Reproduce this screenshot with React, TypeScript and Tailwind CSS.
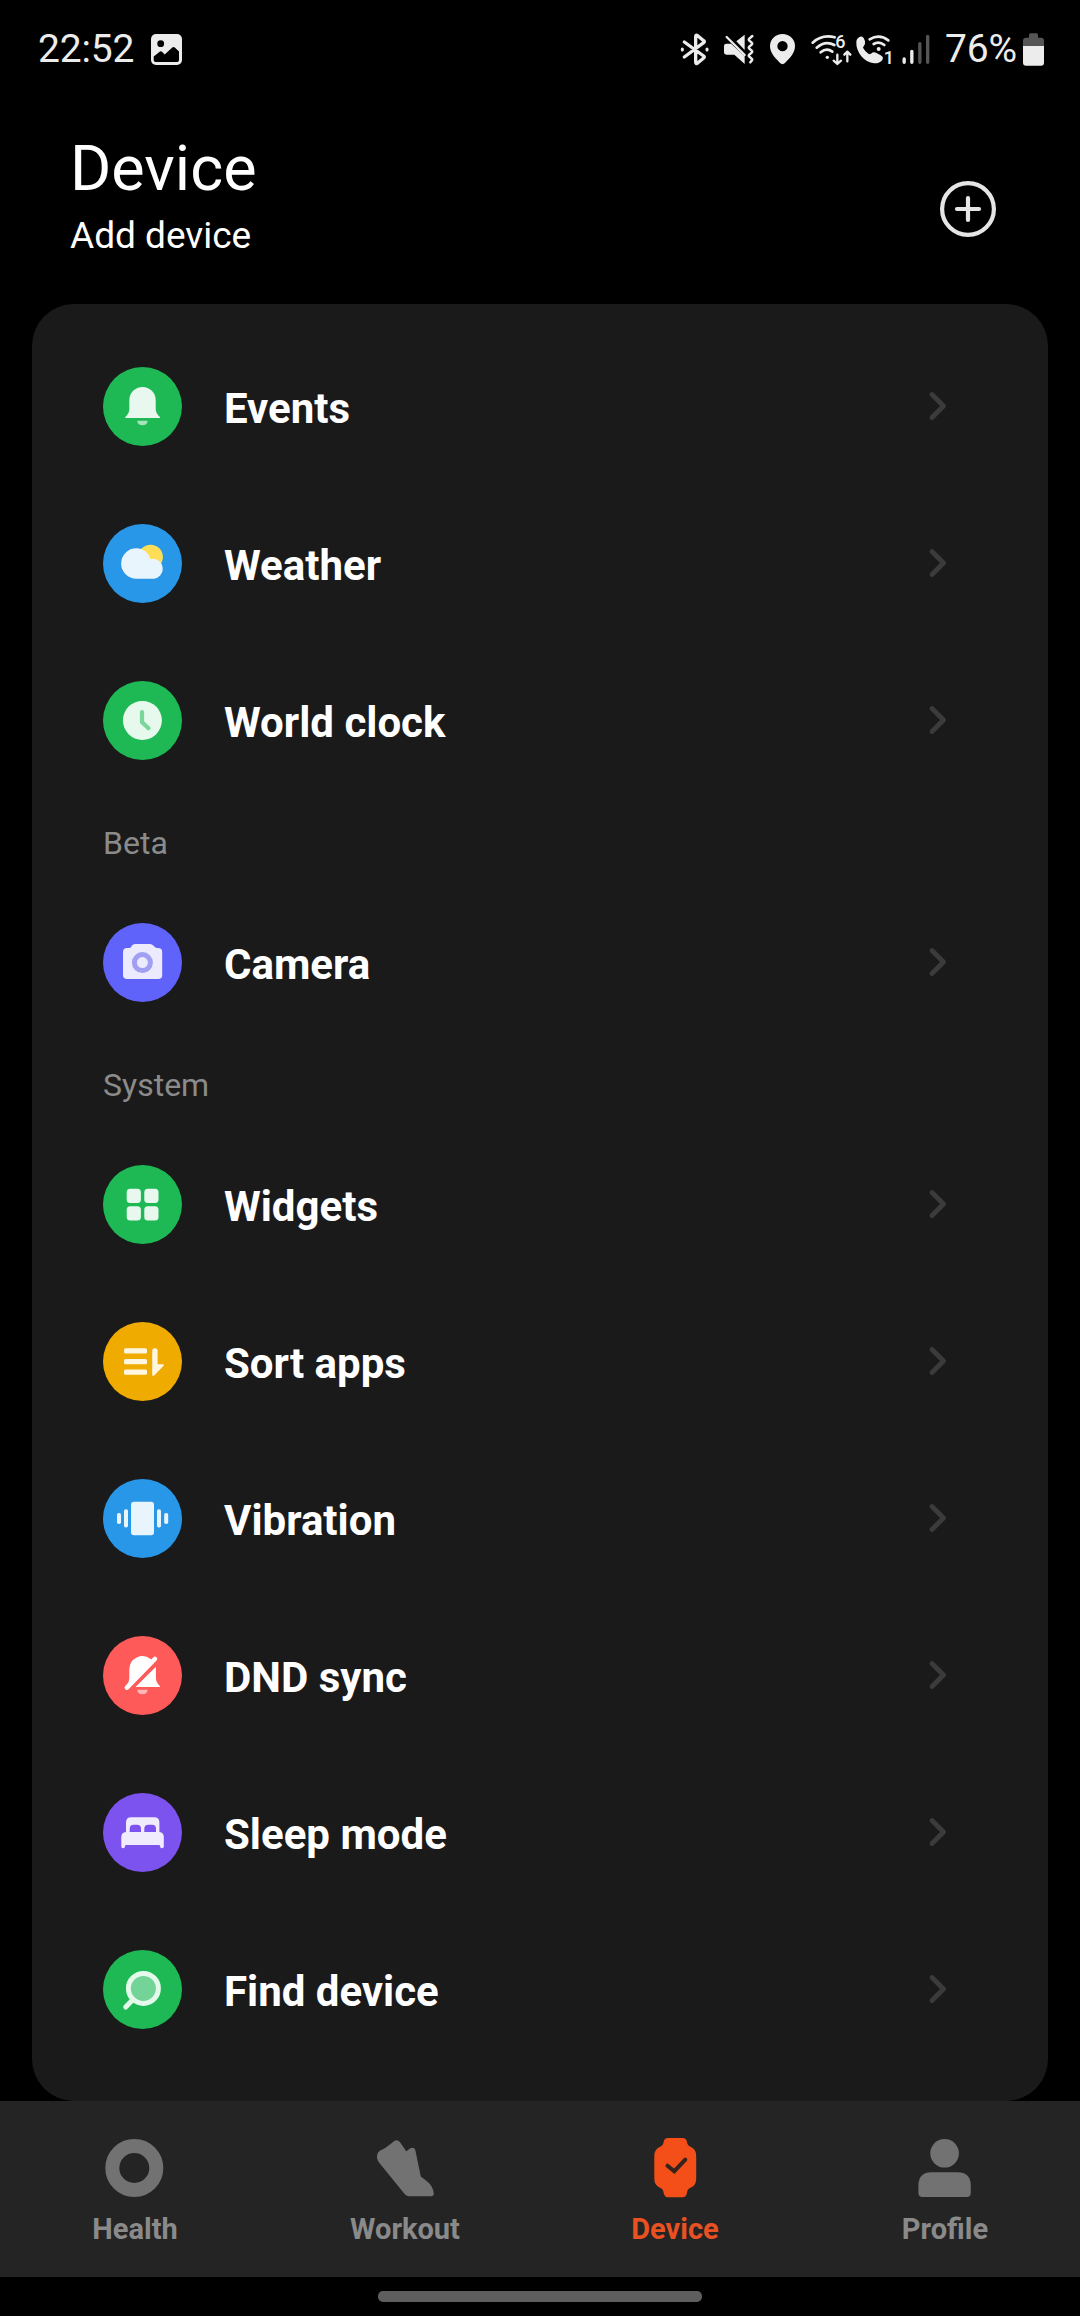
import type { ReactNode } from "react";

const GREEN = "#1eb955";
const BLUE = "#2897e8";

function Bell() {
  return (
    <>
      <path d="M26.3 33.2a13.2 13.2 0 0 1 26.4 0V42q0 4.6 4.3 8.1.7.9-.6.9H22.9q-1.3 0-.6-.9Q26.3 46.600 26.300 42Z" fill="#e8f8ee" />
      <path d="M34.200 53.700h10.500a5.300 5.300 0 0 1-10.500 0Z" fill="#a5e3bb" />
    </>
  );
}

function Weather() {
  return (
    <>
      <circle cx="47.600" cy="33" r="12.300" fill="#ffdd55" />
      <path d="M33.400 24.200c6.800 0 12.300 4.500 14.200 11 .6-.2 2-.4 3.200-.4a10 10 0 0 1 0 19.900H33.400a15.250 15.250 0 0 1 0-30.500Z" fill="#e9f5fd" />
    </>
  );
}

function Clock() {
  return (
    <>
      <circle cx="39.400" cy="39.400" r="19.500" fill="#e6f9ec" />
      <path d="M39 31v10.200l6.500 6" fill="none" stroke="#7ad79a" strokeWidth="4.200" strokeLinecap="round" strokeLinejoin="round" />
    </>
  );
}

function Camera() {
  return (
    <>
      <path d="M32 21h15q2 0 3.300 1.500l1.500 1.600q1 1 2.600 1H55q4.200 0 4.200 4.200V52q0 4-4 4H24q-4 0-4-4V29.300q0-4.200 4.200-4.200.9 0 2-.1 1.200-.2 2-1l.7-1.500Q30 21 32 21Z" fill="#ecebfe" />
      <circle cx="39.400" cy="39.600" r="8" fill="none" stroke="#a09ff2" strokeWidth="5" />
    </>
  );
}

function Widgets() {
  return (
    <g fill="#e8f8ee">
      <rect x="23.700" y="23.700" width="14.200" height="14.200" rx="3.500" />
      <rect x="41.300" y="23.700" width="14.200" height="14.200" rx="3.500" />
      <rect x="23.700" y="41.200" width="14.200" height="14.200" rx="3.500" />
      <rect x="41.300" y="41.200" width="14.200" height="14.200" rx="3.500" />
    </g>
  );
}

function Sort() {
  return (
    <g fill="#fef6e0">
      <rect x="21" y="26.300" width="23" height="5.300" rx="1.500" />
      <rect x="21" y="37" width="23" height="5.300" rx="1.500" />
      <rect x="21" y="47.500" width="23" height="5.300" rx="1.500" />
      <path d="M49.200 28.300q0-2 2.700-2t2.700 2V42.200H60q1.800 0 .6 1.500L51.700 53q-2.500 2-2.500-.5Z" />
    </g>
  );
}

function Vibration() {
  return (
    <g fill="#e9f5fd">
      <rect x="28" y="22.700" width="23" height="33.500" rx="3" />
      <rect x="21" y="30.300" width="4" height="18.200" rx="1.800" />
      <rect x="14" y="34" width="4" height="11" rx="1.800" />
      <rect x="54" y="30.300" width="4" height="18.200" rx="1.800" />
      <rect x="61.200" y="34" width="4" height="11" rx="1.800" />
    </g>
  );
}

function BellOff() {
  return (
    <>
      <path d="M26.300 33.200a13.200 13.200 0 0 1 21.300-10.300L49.500 24 25 49.500 23.800 49Q26.300 46 26.300 42Z" fill="#fff" />
      <path d="M23.900 51.700 51.900 23" stroke="#fff" strokeWidth="4.600" strokeLinecap="round" />
      <path d="M52.900 30.700V42q0 4.600 4 8.100.7.900-.6.900H32.500Z" fill="#fff" />
      <path d="M34.200 53.700h10.500a5.300 5.300 0 0 1-10.500 0Z" fill="#ffb6b6" />
    </>
  );
}

function Bed() {
  return (
    <path
      fillRule="evenodd"
      d="M28.300 24.200h22.800q5.300 0 5.300 5.300v9.600q4.400.6 4.400 5v9.400q0 1.800-1.800 1.800-1.500 0-1.800-1.500L56.600 52H22.500l-.6 1.800q-.4 1.500-1.800 1.500-1.800 0-1.800-1.800v-9.400q0-4.400 4.700-5v-9.600q0-5.300 5.300-5.300ZM26.700 39.100H38v-3.400q0-3.900-3.900-3.900h-3.500q-3.900 0-3.900 3.900ZM41.300 39.100H53v-3.400q0-3.900-3.900-3.900h-3.900q-3.900 0-3.900 3.900Z"
      fill="#f1ecfd"
    />
  );
}

function Find() {
  return (
    <>
      <path d="m29.500 50-6.800 7" stroke="#e3f9ea" strokeWidth="5" strokeLinecap="round" />
      <circle cx="40.400" cy="38.400" r="15" fill="#74d397" stroke="#e3f9ea" strokeWidth="5" />
    </>
  );
}

type Item = { label: string; color: string; icon: ReactNode };

const apps: Item[] = [
  { label: "Events", color: GREEN, icon: <Bell /> },
  { label: "Weather", color: BLUE, icon: <Weather /> },
  { label: "World clock", color: GREEN, icon: <Clock /> },
];
const beta: Item[] = [{ label: "Camera", color: "#6063fa", icon: <Camera /> }];
const system: Item[] = [
  { label: "Widgets", color: GREEN, icon: <Widgets /> },
  { label: "Sort apps", color: "#efab00", icon: <Sort /> },
  { label: "Vibration", color: BLUE, icon: <Vibration /> },
  { label: "DND sync", color: "#ff5a5a", icon: <BellOff /> },
  { label: "Sleep mode", color: "#7c53ee", icon: <Bed /> },
  { label: "Find device", color: GREEN, icon: <Find /> },
];

function Row({ label, color, icon }: Item) {
  return (
    <li className="flex h-[157px] items-center pr-[101px] pl-[71px]">
      <svg className="size-[79px] shrink-0" viewBox="0 0 79 79">
        <circle cx="39.500" cy="39.500" r="39.500" fill={color} />
        {icon}
      </svg>
      <span className="ml-[42px] flex-1 pt-[5px] text-[42px] leading-[50px] font-bold text-white">{label}</span>
      <svg className="mb-px h-[30px] w-[20px]" viewBox="0 0 20 30" fill="none" stroke="#3b3b3b" strokeWidth="4.800" strokeLinecap="round" strokeLinejoin="round">
        <path d="m5 3.500 11.500 11.500L5 26.500" />
      </svg>
    </li>
  );
}

function Section({ title, items }: { title?: string; items: Item[] }) {
  return (
    <section>
      {title && <h2 className="flex h-[85px] items-center pt-[2px] pl-[71px] text-[32px] leading-[38px] text-[#8b8b8b]">{title}</h2>}
      <ul>
        {items.map((item) => (
          <Row key={item.label} {...item} />
        ))}
      </ul>
    </section>
  );
}

function StatusBar() {
  return (
    <div className="flex h-[98px] items-center pr-[35px] pl-[38px] text-[39px] leading-[46px] text-[#ececec]">
      <span className="w-[113px] tracking-[-0.2px]">22:52</span>
      <svg className="h-[31px] w-[31px]" viewBox="0 0 31 31">
        <rect width="31" height="31" rx="5" fill="#ececec" />
        <circle cx="9.700" cy="9.700" r="3.400" fill="#000" />
        <path d="M2.700 22.500 9 17.600q1-.6 2 .2l2.700 2.800 7.600-7q1.300-1 2.500 0l4.200 4V26q0 2-2 2H4.700q-2 0-2-2Z" fill="#000" />
      </svg>
      <div className="ml-auto flex items-center">
        <svg className="h-[36px] w-[35px]" viewBox="60 60 105 108" fill="none" stroke="#ececec" strokeWidth="10" strokeLinecap="round" strokeLinejoin="round">
          <path d="m73 93 58 42q4 3 0 6l-18 15q-6 4-6-3V77q0-7 6-3l18 15q4 3 0 6l-58 43" />
          <path d="M67 114v3M141 114v3" strokeWidth="9" />
        </svg>
        <svg className="h-[36px] w-[49px]" viewBox="165 60 147 108" fill="#ececec">
          <path d="M199 98h14l41 38v23l-31-28h-24q-7 0-7-7v-19q0-7 7-7ZM229 91l25-20v46Z" />
          <path d="m200 78 54 54" stroke="#ececec" strokeWidth="7" strokeLinecap="round" />
          <path d="m277 75-9 8q-3 3 0 6l7 6q3 3 0 6l-7 6q-3 3 0 6l7 6q3 3 0 6l-7 6q-3 3 0 6l7 6q3 3 0 6l-4 5" fill="none" stroke="#ececec" strokeWidth="7.500" strokeLinecap="round" />
        </svg>
        <svg className="h-[36px] w-[41px]" viewBox="312 60 123 108">
          <path fillRule="evenodd" d="M367.500 69c21 0 37.500 15 37.500 36 0 23-18 38-30 51q-7.500 7-15 0c-12-13-30-28-30-51 0-21 16.500-36 37.500-36Zm0 21a15.500 15.500 0 1 0 0 31 15.500 15.500 0 0 0 0-31Z" fill="#ececec" />
        </svg>
        <svg className="h-[36px] w-[49px]" viewBox="435 60 147 108" fill="none" stroke="#ececec" strokeWidth="8" strokeLinecap="round">
          <path d="M458 95q29-26 66-16M470 110q26-23 53-8M482 124q18-15 35-2" />
          <circle cx="502" cy="139" r="5" fill="#ececec" stroke="none" />
          <path d="M532 131v27m-11-9 11 10 11-10M562 151v-28m-9 8 9-9 9 9" strokeWidth="7" strokeLinejoin="round" />
          <text x="526" y="112" fontSize="54" fontWeight="500" fill="#ececec" stroke="none">6</text>
        </svg>
        <svg className="h-[36px] w-[43px]" viewBox="582 60 129 108" fill="none" stroke="#ececec" strokeWidth="8" strokeLinecap="round">
          <path d="M592 83q8-9 15-6 5 2 8 14 2 10-4 15l-2 4q6 12 18 20l6-2q7-7 15-3l14 8q10 5 5 14-9 11-25 10-22-2-38-21-16-20-15-42 0-7 3-11Z" fill="#ececec" stroke="none" />
          <path d="M629 85q29-17 56 3M641 99q16-10 32 3" />
          <circle cx="656" cy="114" r="6" fill="#ececec" stroke="none" />
          <text x="671" y="158" fontSize="54" fontWeight="500" fill="#ececec" stroke="none">1</text>
        </svg>
        <svg className="h-[36px] w-[41px]" viewBox="711 60 123 108" fill="none" strokeWidth="10" strokeLinecap="round">
          <path d="M732.500 144v10M755.500 121v33" stroke="#ececec" />
          <path d="M779.500 98v56M803 76v78" stroke="#555" />
        </svg>
        <span className="w-[84px] pl-[7px] tracking-[-0.200px]">76%</span>
        <svg className="h-[36px] w-[23px]" viewBox="1086 60 69 108">
          <path d="M1107 72q0-5 5-5h17q5 0 5 5v8h9q9 0 9 9v17h-63V89q0-9 9-9h9Z" fill="#555" />
          <path d="M1089 105h63v50q0 9-9 9h-45q-9 0-9-9Z" fill="#ececec" />
        </svg>
      </div>
    </div>
  );
}

function Tab({ label, active, children }: { label: string; active?: boolean; children: ReactNode }) {
  return (
    <div className={`flex flex-1 flex-col items-center pt-[36px] ${active ? "text-[#e95122]" : "text-[#8a8a8a]"}`}>
      <svg className="h-[61px] w-[60px]" viewBox="0 0 60 61" fill="#727272">
        {children}
      </svg>
      <span className="mt-[13px] text-[29px] leading-[36px] font-bold">{label}</span>
    </div>
  );
}

export default function App() {
  return (
    <div className="flex h-[2316px] w-[1080px] flex-col overflow-hidden bg-black font-['Roboto',sans-serif]">
      <StatusBar />
      <header className="flex h-[206px] items-start justify-between pr-[84px] pl-[70px]">
        <div className="flex flex-col pt-[34px]">
          <h1 className="text-[63px] leading-[74px] text-white">Device</h1>
          <p className="mt-[8px] text-[37px] leading-[44px] text-white">Add device</p>
        </div>
        <svg className="mt-[83px] size-[56px]" viewBox="0 0 56 56" fill="none" stroke="#e5e5e5" strokeWidth="4.200" strokeLinecap="round">
          <circle cx="28" cy="28" r="25.900" />
          <path d="M28 17v22M17 28h22" />
        </svg>
      </header>
      <main className="mx-[32px] h-[1797px] shrink-0 rounded-[42px] bg-[#1a1a1a] pt-[24px]">
        <Section items={apps} />
        <Section title="Beta" items={beta} />
        <Section title="System" items={system} />
      </main>
      <nav className="flex h-[176px] shrink-0 bg-[#242424]">
        <Tab label="Health">
          <circle cx="29.300" cy="31" r="22" fill="none" stroke="#727272" strokeWidth="14" />
        </Tab>
        <Tab label="Workout">
          <path d="M2 20.500q-.4-6 5.300-8 2.500-.7 12-8.500 3-2 5.500 1l6.500 9.300 4-3q4-1.800 5 1.700l5.500 26.500 5.500 4.300q6.500 4.500 7.500 12.700 0 2.800-2.800 2.800H34.500q-3.500 0-5.500-3L4 25.500q-1.800-2.500-2-5Z" />
        </Tab>
        <Tab label="Device" active>
          <path d="M23 1h14.500q3.500 0 4.200 3l.8 3q.7 2 3.500 3 5.200 2.300 5.200 9v22.500q0 7-5.200 9-2.800 1-3.500 3l-1 4q-.9 2.700-4 2.700H23q-3 0-3.900-2.700l-1-4q-.7-2-3.500-3-5.300-2.300-5.300-9V19q0-6.700 5.300-9 2.800-1 3.500-3l.8-3Q19.700 1 23 1Z" fill="#f44f19" />
          <path d="m22.500 28.700 6.800 5.500 11-11.500" fill="none" stroke="#36231c" strokeWidth="4" strokeLinecap="round" />
        </Tab>
        <Tab label="Profile">
          <circle cx="29.600" cy="16.300" r="14.300" />
          <path d="M16.500 35.300h26q13.300 0 13.300 13.700v7q0 4-4.200 4H7.600q-4.200 0-4.200-4v-7q0-13.700 13.100-13.700Z" />
        </Tab>
      </nav>
      <div className="flex h-[39px] shrink-0 justify-center pt-[14px]">
        <div className="h-[11px] w-[324px] rounded-[5px] bg-[#5e5e5e]" />
      </div>
    </div>
  );
}
